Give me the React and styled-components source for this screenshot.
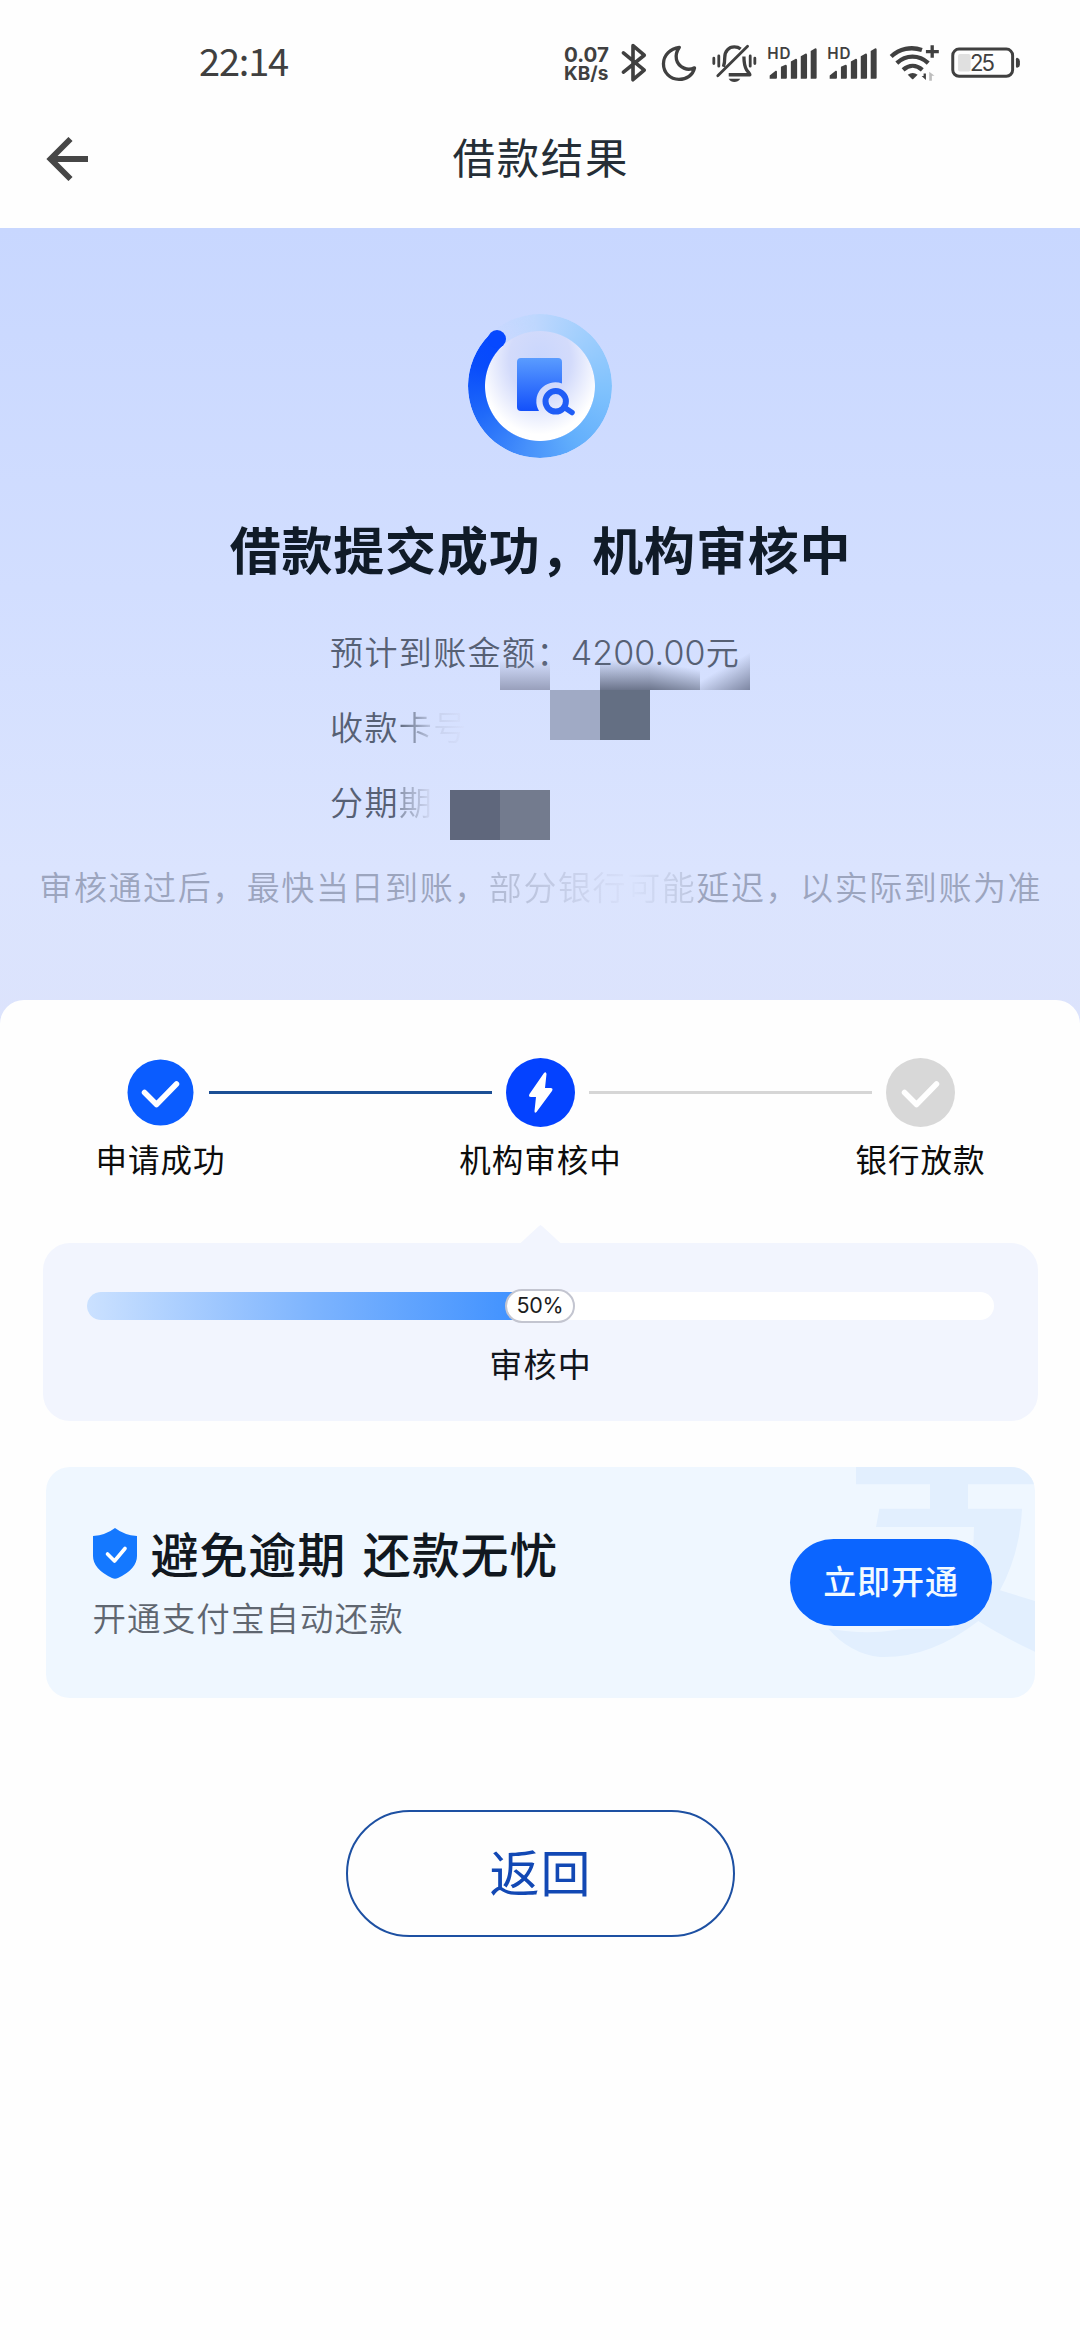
import React from 'react';
import styled, { createGlobalStyle } from 'styled-components';

const GlobalStyle = createGlobalStyle`
  * {
    box-sizing: border-box;
  }

  body {
    margin: 0;
    background: #fefefe;
    font-family: 'Noto Sans CJK SC', sans-serif;
  }
`;

const Page = styled.div`
  width: 1080px;
  min-height: 2340px;
  background: #fefefe;
`;

const StatusBar = styled.div`
  display: flex;
  align-items: center;
  height: 84px;
  padding: 40px 60px 0 199px;
  color: #404040;
`;

const Clock = styled.div`
  padding-bottom: 4px;
  font-size: 38px;
  line-height: 40px;
  letter-spacing: -1.2px;
  margin-right: auto;
`;

const NetSpeed = styled.div`
  display: flex;
  flex-direction: column;
  width: 47px;
  padding-top: 3px;
  font-family: Inter, sans-serif;
  font-weight: 700;
  line-height: 19px;
  white-space: nowrap;

  span:first-child {
    font-size: 20.5px;
  }

  span:last-child {
    font-size: 19px;
  }
`;

const StatusIcon = styled.svg`
  flex: none;
  height: 43px;
  width: ${props => props.$width}px;
  margin-left: ${props => props.$gap}px;
  overflow: visible;
  fill: none;
  stroke: none;
`;

const NavBar = styled.div`
  display: grid;
  grid-template-columns: 200px 1fr 200px;
  align-items: center;
  height: 144px;
  padding-top: 5px;

  svg {
    margin-left: 46px;
  }
`;

const NavTitle = styled.h1`
  margin: 0;
  padding-bottom: 5px;
  text-align: center;
  font-size: 42.5px;
  font-weight: 400;
  line-height: 60px;
  letter-spacing: 1.6px;
  text-indent: 1.6px;
  color: #252e36;
`;

const Hero = styled.div`
  display: flex;
  flex-direction: column;
  align-items: center;
  height: 802px;
  padding-top: 86px;
  background: linear-gradient(180deg, #c8d7ff 0%, #d2deff 45%, #dbe4fe 80%, #dce3fc 100%);
`;

const Ring = styled.div`
  position: relative;
  flex: none;
  width: 144px;
  height: 144px;
  display: flex;
  align-items: center;
  justify-content: center;

  &::before {
    content: '';
    position: absolute;
    inset: 0;
    border-radius: 50%;
    background: conic-gradient(
      from -42deg,
      rgba(190, 215, 254, 0) 0deg,
      #bed7fe 38deg,
      #a2cffd 80deg,
      #80c2fd 135deg,
      #62affc 190deg,
      #4690fb 235deg,
      #206af9 285deg,
      #084cfb 330deg,
      #0648ff 360deg
    );
    mask: radial-gradient(circle, transparent 54.5px, #000 55.5px);
  }

  &::after {
    content: '';
    position: absolute;
    left: 20px;
    top: 15.5px;
    width: 18px;
    height: 18px;
    border-radius: 50%;
    background: #0648ff;
  }
`;

const RingCore = styled.div`
  display: flex;
  align-items: center;
  justify-content: center;
  width: 110px;
  height: 110px;
  border-radius: 50%;
  background: radial-gradient(ellipse 62px 75px at 50% 26%, #c9d6fd 0%, #d3dbfb 50%, #ffffff 100%);

  svg {
    overflow: visible;
  }
`;

const Headline = styled.h2`
  margin: 60px 0 0;
  font-size: 51px;
  font-weight: 700;
  line-height: 60px;
  letter-spacing: 0.8px;
  text-indent: 1px;
  color: #101b28;
`;

const InfoList = styled.div`
  position: relative;
  width: 420px;
  margin-top: 36px;
`;

const InfoRow = styled.div`
  height: 75px;
  font-size: 33px;
  font-weight: 350;
  line-height: 75px;
  letter-spacing: 1.4px;
  white-space: nowrap;
  color: #566074;
`;

const Amount = styled.span`
  font-family: Inter, sans-serif;
  font-size: 34px;
  letter-spacing: 0.1px;
`;

const Fade = styled.span`
  background: linear-gradient(90deg, ${props => props.$from}, ${props => props.$to});
  background-clip: text;
  color: transparent;
`;

// blocks that hide the private part of the rows
const Mosaic = styled.i`
  position: absolute;
  left: ${props => props.$x}px;
  top: ${props => props.$y}px;
  width: 50px;
  height: ${props => props.$h || 50}px;
  background: ${props => props.$fill};
`;

const Notice = styled.p`
  margin: 22px 0 0;
  font-size: 33px;
  font-weight: 350;
  line-height: 50px;
  letter-spacing: 1.58px;
  text-indent: 1.5px;
  white-space: nowrap;
  color: #9ca5be;
`;

const Sheet = styled.div`
  position: relative;
  display: flex;
  flex-direction: column;
  align-items: center;
  margin-top: -30px;
  padding-top: 58px;
  border-radius: 24px 24px 0 0;
  background: #fefefe;
`;

const Steps = styled.div`
  display: flex;
  align-items: flex-start;
`;

const Step = styled.div`
  display: flex;
  flex-direction: column;
  align-items: center;
  width: 97px;
`;

const StepLabel = styled.div`
  margin-top: 11px;
  padding-bottom: 3px;
  font-size: 31.5px;
  line-height: 40px;
  letter-spacing: 1px;
  text-indent: 1px;
  white-space: nowrap;
  color: #0c0c0c;
`;

const StepLine = styled.div`
  width: 283px;
  height: 3px;
  margin-top: 33px;
  background: ${props => (props.$done ? '#1c4f95' : '#d6d6d6')};
`;

const ProgressPanel = styled.div`
  position: relative;
  width: 995px;
  height: 178px;
  margin-top: 62px;
  padding: 49px 44px 0;
  border-radius: 27px;
  background: #f2f5fe;

  &::before {
    content: '';
    position: absolute;
    left: 477px;
    top: -18px;
    width: 42px;
    height: 19px;
    background: #f2f5fe;
    clip-path: polygon(0 100%, 45% 8%, 50% 0, 55% 8%, 100% 100%);
  }
`;

const Track = styled.div`
  position: relative;
  height: 28px;
  border-radius: 14px;
  background: #ffffff;
`;

const Fill = styled.div`
  height: 100%;
  border-radius: 14px 0 0 14px;
  background: linear-gradient(90deg, #cbe1ff 0%, #7db4fe 50%, #3a8eff 100%);
`;

const Percent = styled.div`
  position: absolute;
  top: -3px;
  left: 50%;
  width: 70px;
  height: 34px;
  transform: translateX(-50%);
  border: 2px solid #c3c5d0;
  border-radius: 17px;
  background: #ffffff;
  text-align: center;
  font-family: Inter, sans-serif;
  font-size: 21.5px;
  line-height: 29px;
  letter-spacing: -0.3px;
  color: #1c1c20;
`;

const ProgressLabel = styled.div`
  margin-top: 23px;
  text-align: center;
  font-size: 33px;
  line-height: 40px;
  letter-spacing: 1.3px;
  text-indent: 1.3px;
  color: #12151c;
`;

const Promo = styled.div`
  position: relative;
  display: flex;
  align-items: center;
  justify-content: space-between;
  width: 989px;
  height: 231px;
  margin-top: 46px;
  padding: 0 43px 0 47px;
  border-radius: 24px;
  background: #eff7ff;
  overflow: hidden;
`;

const Watermark = styled.svg`
  position: absolute;
  top: 0;
  right: 0;
`;

const PromoTitle = styled.div`
  display: flex;
  align-items: center;
  gap: 14px;
  font-size: 48px;
  font-weight: 500;
  line-height: 60px;
  letter-spacing: 0.9px;
  word-spacing: 5px;
  color: #111820;

  svg {
    margin-top: 3px;
  }
`;

const PromoText = styled.div`
  margin-top: 15px;
  font-size: 33.5px;
  font-weight: 350;
  line-height: 40px;
  letter-spacing: 1.1px;
  color: #5f6670;
`;

const PromoCopy = styled.div`
  padding-bottom: 6px;
`;

const PromoButton = styled.button`
  position: relative;
  width: 202px;
  height: 87px;
  padding: 0 0 5px;
  border: 0;
  border-radius: 44px;
  background: #0b65ff;
  font-family: inherit;
  font-size: 33px;
  font-weight: 500;
  letter-spacing: 0.9px;
  text-indent: 1px;
  color: #f2faff;
`;

const BackButton = styled.button`
  width: 389px;
  height: 127px;
  margin-top: 112px;
  padding: 0 0 7px;
  border: 2px solid #1d50a2;
  border-radius: 64px;
  background: transparent;
  font-family: inherit;
  font-size: 50px;
  letter-spacing: 1px;
  text-indent: 1px;
  color: #1248b4;
`;

const SignalIcon = ({ gap }) => (
  <StatusIcon $width={49} $gap={gap} viewBox="685 60 148 130">
    <text x="683" y="114" fontSize="46" fontWeight="600" fontFamily="Inter, sans-serif" fill="#404040" textLength="70">HD</text>
    <path
      fill="#404040"
      d="M690 174v-10l18-14q4-1 4 3v18q0 3-3 3zM724 174v-36l14-6q4 0 4 4v35q0 3-3 3zM754 174v-52l15-8q4 0 4 4v53q0 3-3 3zM784 174v-68l15-8q4 0 4 4v69q0 3-3 3zM814 174v-84l14-8q4 0 4 4v85q0 3-3 3z"
    />
  </StatusIcon>
);

const StatusIcons = () => (
  <>
    <StatusIcon $width={24} $gap={11} viewBox="246 60 72 130">
      <path d="M250 96l63 52-34 29V74l34 29-63 51" stroke="#404040" strokeWidth="11" strokeLinejoin="round" strokeLinecap="round" />
    </StatusIcon>
    <StatusIcon $width={34} $gap={16} viewBox="366 60 102 130">
      <path d="M418 79c-28 4-48 24-48 50 0 27 20 47 47 47 23 0 42-13 47-35-10 5-21 6-32 1-25-11-31-38-14-63z" stroke="#404040" strokeWidth="10" strokeLinejoin="round" />
    </StatusIcon>
    <StatusIcon $width={45} $gap={15.5} viewBox="515 60 135 130">
      <path d="M532 165l90-89M520 112v16M535 105v31M630 105v31M644 112v16" stroke="#404040" strokeWidth="8.5" strokeLinecap="round" />
      <path d="M549 138c3-8 4-18 4-28 0-19 12-32 29-32 8 0 14 2 19 6M611 107c0 16 0 27 8 40 5 8 10 11 10 15h-64" stroke="#404040" strokeWidth="10" strokeLinejoin="round" />
      <path d="M565 174h35q-7 10-18 10t-17-10z" fill="#404040" />
    </StatusIcon>
    <SignalIcon gap={11.5} />
    <SignalIcon gap={11} />
    <StatusIcon $width={49} $gap={13.3} viewBox="1053 60 147 130">
      <path d="M1056 107c25-24 60-31 93-20M1073 127c28-26 67-26 95 0M1092 147c18-16 40-16 58 0" stroke="#404040" strokeWidth="13" />
      <path d="M1106 162q15-11 30 0l-13 13q-2 2-4 0z" fill="#404040" />
      <path d="M1180 73v38M1161 92h39" stroke="#404040" strokeWidth="10" />
      <path d="M1161 158v20l-13-12h6v-8z" fill="#404040" />
      <path d="M1171 180v-27l16 12h-8v15z" fill="#bdbdbd" />
    </StatusIcon>
    <StatusIcon $width={69} $gap={11.6} viewBox="1235 60 208 130">
      <rect x="1240" y="84.500" width="181" height="82" rx="19" stroke="#404040" strokeWidth="9" />
      <rect x="1256" y="99" width="38" height="53" rx="6" fill="#e0e0e0" />
      <path d="M1431 115q0-4 4-4 8 2 8 10v11q0 7-8 9-4 0-4-4z" fill="#404040" />
      <text x="1330" y="152" textAnchor="middle" fontSize="67" fontFamily="Inter, sans-serif" fill="#404040" textLength="76">25</text>
    </StatusIcon>
  </>
);

const CheckCircle = ({ size, color }) => (
  <svg width="69" height="69" viewBox="0 0 69 69" fill="none">
    <circle cx="34.500" cy="34.500" r={size / 2} fill={color} />
    <path d="M18.500 34.500l12 12 20-20.500" stroke="#fff" strokeWidth="5.500" strokeLinecap="round" strokeLinejoin="round" />
  </svg>
);

const App = () => {
  const progress = 50;

  return (
    <Page>
      <GlobalStyle />
      <StatusBar>
        <Clock>22:14</Clock>
        <NetSpeed>
          <span>0.07</span>
          <span>KB/s</span>
        </NetSpeed>
        <StatusIcons />
      </StatusBar>
      <NavBar>
        <svg width="44" height="44" viewBox="0 0 44 44" fill="none" stroke="#464646" strokeWidth="5.800">
          <path d="M24.500 2L4.500 22l20 20M5 22h37" />
        </svg>
        <NavTitle>借款结果</NavTitle>
      </NavBar>

      <Hero>
        <Ring>
          <RingCore>
            <svg width="60" height="60" viewBox="0 0 60 60" fill="none">
              <defs>
                <linearGradient id="doc" x1="0" y1="0" x2="0" y2="1">
                  <stop offset="0" stopColor="#5a9cff" />
                  <stop offset="1" stopColor="#1350fa" />
                </linearGradient>
              </defs>
              <path d="M11 2h37a4 4 0 0 1 4 4v21.500a19 19 0 0 0-23 27.500H11a4 4 0 0 1-4-4V6a4 4 0 0 1 4-4z" fill="url(#doc)" />
              <circle cx="45.700" cy="45.300" r="10.200" stroke="#1f5df6" strokeWidth="6" />
              <path d="M54.500 51.500l7.500 5" stroke="#1f5df6" strokeWidth="5.500" strokeLinecap="round" />
            </svg>
          </RingCore>
        </Ring>
        <Headline>借款提交成功，机构审核中</Headline>
        <InfoList>
          <InfoRow>
            预计到账金额：<Amount>4200.00</Amount>元
          </InfoRow>
          <InfoRow>
            收款<Fade $from="#5f697e" $to="#c3cdea">卡</Fade>
            <Fade $from="#c6d0ec" $to="#d8e1fe">号</Fade>
          </InfoRow>
          <InfoRow>
            分期<Fade $from="#8a94ac" $to="#d7dffa">期</Fade>
          </InfoRow>
          <Mosaic $x={170} $y={46} $h={30} $fill="linear-gradient(180deg, rgba(150,158,188,0), #989fbb)" />
          <Mosaic $x={270} $y={46} $h={30} $fill="linear-gradient(180deg, rgba(100,110,135,0), #6c758c)" />
          <Mosaic $x={320} $y={46} $h={30} $fill="linear-gradient(190deg, rgba(100,110,135,0) 25%, #6c758c)" />
          <Mosaic $x={370} $y={36} $h={40} $fill="linear-gradient(150deg, rgba(100,110,140,0) 45%, #7d86a2)" />
          <Mosaic $x={220} $y={76} $fill="#a0aac5" />
          <Mosaic $x={270} $y={76} $fill="#646f83" />
          <Mosaic $x={120} $y={176} $fill="#5f677c" />
          <Mosaic $x={170} $y={176} $fill="#737b8e" />
        </InfoList>
        <Notice>
          审核通过后，最快当日到账，
          <Fade $from="#b0b9d2" $to="#d8e0fa">部分银行</Fade>
          <Fade $from="#dae3fd" $to="#bcc5de">可能</Fade>
          延迟，以实际到账为准
        </Notice>
      </Hero>

      <Sheet>
        <Steps>
          <Step>
            <CheckCircle size={66} color="#0a5cff" />
            <StepLabel>申请成功</StepLabel>
          </Step>
          <StepLine $done />
          <Step>
            <svg width="69" height="69" viewBox="0 0 69 69">
              <circle cx="34.500" cy="34.500" r="34.500" fill="#0442ff" />
              <path d="M38 15q2-2 2.500 1l-1.500 14h5.500q3 0 1.500 3L30.500 54q-2 2-2-1l1.500-14h-5q-3 0-1.500-3z" fill="#fff" />
            </svg>
            <StepLabel>机构审核中</StepLabel>
          </Step>
          <StepLine />
          <Step>
            <CheckCircle size={69} color="#d8d8d8" />
            <StepLabel>银行放款</StepLabel>
          </Step>
        </Steps>

        <ProgressPanel>
          <Track>
            <Fill style={{ width: `${progress}%` }} />
            <Percent>{progress}%</Percent>
          </Track>
          <ProgressLabel>审核中</ProgressLabel>
        </ProgressPanel>

        <Promo>
          <Watermark width="240" height="231" viewBox="525 50 720 693" fill="#e2effe">
            <path d="M708 50H1245V102H1044V175H1206Q1200 310 1140 420L1245 452V604Q1150 560 1075 512Q930 625 780 620Q690 610 625 535H1000Q1060 400 1062 230H768L778 175H930V102H708z" />
            <path d="M625 535Q770 560 900 525z" fill="#eff7ff" />
          </Watermark>
          <PromoCopy>
            <PromoTitle>
              <svg width="44" height="51" viewBox="0 0 44 51" fill="none">
                <path d="M22 0q9 7 22 8v20q0 13-19 22-3 1.500-6 0Q0 41 0 28V8Q13 7 22 0z" fill="#1478ff" />
                <path d="M14.500 26l7 7 10.500-12.500" stroke="#fff" strokeWidth="3.600" strokeLinecap="round" strokeLinejoin="round" />
              </svg>
              避免逾期 还款无忧
            </PromoTitle>
            <PromoText>开通支付宝自动还款</PromoText>
          </PromoCopy>
          <PromoButton>立即开通</PromoButton>
        </Promo>

        <BackButton>返回</BackButton>
      </Sheet>
    </Page>
  );
};

export default App;
